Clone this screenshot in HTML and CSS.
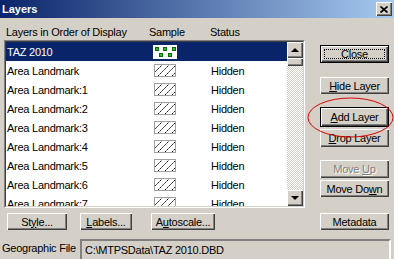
FILE: index.html
```html
<!DOCTYPE html>
<html lang="en">
<head>
    <meta charset="UTF-8">
    <title>Layers</title>
    <link rel="stylesheet" href="styles.css">
</head>
<body>
    <svg class="defs" width="0" height="0">
        <symbol id="hatch" viewBox="0 0 22 13">
            <g stroke="#000" stroke-dasharray="2 1">
                <line x1="-3" y1="12" x2="8" y2="1"/>
                <line x1="4" y1="12" x2="15" y2="1"/>
                <line x1="11" y1="12" x2="22" y2="1"/>
                <line x1="18" y1="12" x2="29" y2="1"/>
            </g>
            <rect x="0.5" y="0.5" width="21" height="12" fill="none" stroke="#a0a0a0"/>
        </symbol>
    </svg>

    <div class="window">
        <div class="titlebar">
            <span class="title">Layers</span>
            <button class="tb-close">
                <svg width="8" height="7" viewBox="0 0 8 7"><path d="M0.5 0.5 L7.5 6.5 M7.5 0.5 L0.5 6.5" stroke="#000" stroke-width="1.7"/></svg>
            </button>
        </div>

        <div class="main">
            <div class="left">
                <div class="cols">
                    <span>Layers in Order of Display</span>
                    <span>Sample</span>
                    <span>Status</span>
                </div>
                <div class="listbox">
                    <div class="listbox-inner">
                        <div class="rows">
                            <div class="row selected">
                                <span>TAZ 2010</span>
                                <span class="taz">
                                    <i style="left:2px;top:2px"></i>
                                    <i style="left:10px;top:2px"></i>
                                    <i style="left:19px;top:2px"></i>
                                    <i style="left:6px;top:8px"></i>
                                    <i style="left:15px;top:8px"></i>
                                </span>
                                <span></span>
                            </div>
                            <div class="row"><span>Area Landmark</span><svg class="hatch"><use href="#hatch"/></svg><span>Hidden</span></div>
                            <div class="row"><span>Area Landmark:1</span><svg class="hatch"><use href="#hatch"/></svg><span>Hidden</span></div>
                            <div class="row"><span>Area Landmark:2</span><svg class="hatch"><use href="#hatch"/></svg><span>Hidden</span></div>
                            <div class="row"><span>Area Landmark:3</span><svg class="hatch"><use href="#hatch"/></svg><span>Hidden</span></div>
                            <div class="row"><span>Area Landmark:4</span><svg class="hatch"><use href="#hatch"/></svg><span>Hidden</span></div>
                            <div class="row"><span>Area Landmark:5</span><svg class="hatch"><use href="#hatch"/></svg><span>Hidden</span></div>
                            <div class="row"><span>Area Landmark:6</span><svg class="hatch"><use href="#hatch"/></svg><span>Hidden</span></div>
                            <div class="row"><span>Area Landmark:7</span><svg class="hatch"><use href="#hatch"/></svg><span>Hidden</span></div>
                        </div>
                        <div class="scrollbar">
                            <div class="sb-btn"><span class="arrow-up"></span></div>
                            <div class="sb-thumb"></div>
                            <div class="sb-track"></div>
                            <div class="sb-btn"><span class="arrow-down"></span></div>
                        </div>
                    </div>
                </div>
                <div class="btnrow">
                    <button class="btn b-style">St<u>y</u>le...</button>
                    <button class="btn b-labels"><u>L</u>abels...</button>
                    <button class="btn b-auto">A<u>u</u>toscale...</button>
                </div>
            </div>

            <div class="right">
                <button class="btn default focus b-close">Close</button>
                <button class="btn b-hide"><u>H</u>ide Layer</button>
                <button class="btn default b-add"><u>A</u>dd Layer</button>
                <button class="btn b-drop"><u>D</u>rop Layer</button>
                <button class="btn disabled b-up">Move <u>U</u>p</button>
                <button class="btn b-down">Move Do<u>w</u>n</button>
                <button class="btn b-meta">Metadata</button>
            </div>
        </div>

        <div class="geo">
            <span class="geo-label">Geographic File</span>
            <div class="field">C:\MTPSData\TAZ 2010.DBD</div>
        </div>

        <svg class="callout" width="87" height="42" viewBox="0 0 87 42">
            <ellipse cx="43.5" cy="20.5" rx="42.5" ry="19.5" fill="none" stroke="#e00000" stroke-width="1"/>
        </svg>
    </div>
</body>
</html>
```

FILE: styles.css
```css
/* Janela no estilo clássico */
body {
    margin: 0;
    background-color: #d4d0c8;
    font-family: "Liberation Sans", Arial, sans-serif;
    font-size: 11px;
    letter-spacing: -0.25px;
    color: #000;
}
.defs {
    position: absolute;
}
.window {
    position: relative;
    width: 394px;
    height: 259px;
    overflow: hidden;
}

/* Barra de título */
.titlebar {
    height: 18px;
    display: flex;
    justify-content: space-between;
    align-items: flex-start;
    padding: 0 2px 0 2px;
    box-sizing: border-box;
    background: linear-gradient(to right, #0a246a, #a6caf0);
}
.title {
    color: #fff;
    font-weight: bold;
    letter-spacing: 0;
    line-height: 18px;
}
.tb-close {
    margin-top: 2px;
    width: 16px;
    height: 14px;
    padding: 0;
    border: none;
    background-color: #d4d0c8;
    display: flex;
    align-items: center;
    justify-content: center;
    box-shadow: inset 1px 1px #fff, inset -1px -1px #404040, inset -2px -2px #808080;
}

/* Conteúdo principal */
.main {
    display: flex;
}
.left {
    width: 301px;
    margin-left: 4px;
    padding-top: 8px;
}
.cols {
    display: grid;
    grid-template-columns: 143px 61px 1fr;
    padding-left: 2px;
    height: 13px;
    line-height: 13px;
    margin-bottom: 1px;
}

/* Lista de camadas */
.listbox {
    height: 168px;
    box-sizing: border-box;
    border: 1px solid;
    border-color: #808080 #fff #fff #808080;
}
.listbox-inner {
    height: 100%;
    box-sizing: border-box;
    border: 1px solid;
    border-color: #404040 #d4d0c8 #d4d0c8 #404040;
    display: flex;
}
.rows {
    flex: 1;
    background-color: #fff;
    overflow: hidden;
}
.row {
    display: grid;
    grid-template-columns: 146px 58px 1fr;
    align-items: center;
    height: 19px;
    padding-left: 1px;
}
.row.selected {
    background-color: #0a246a;
    color: #fff;
}
.hatch {
    width: 22px;
    height: 13px;
    margin-left: 1px;
}
.taz {
    position: relative;
    width: 24px;
    height: 14px;
    background-color: #fff;
}
.taz i {
    position: absolute;
    width: 2px;
    height: 2px;
    background-color: #2fc02f;
    border: 1px solid #0a6a0a;
}

/* Barra de rolagem */
.scrollbar {
    width: 16px;
    display: flex;
    flex-direction: column;
}
.sb-btn,
.sb-thumb {
    background-color: #d4d0c8;
    box-shadow: inset 1px 1px #fff, inset -1px -1px #404040, inset -2px -2px #808080;
    display: flex;
    align-items: center;
    justify-content: center;
}
.sb-btn {
    height: 16px;
}
.sb-thumb {
    height: 8px;
}
.sb-track {
    flex: 1;
    background: repeating-conic-gradient(#fff 0 25%, #d4d0c8 0 50%) 0 0 / 2px 2px;
}
.arrow-up {
    border-left: 4px solid transparent;
    border-right: 4px solid transparent;
    border-bottom: 4px solid #000;
}
.arrow-down {
    border-left: 4px solid transparent;
    border-right: 4px solid transparent;
    border-top: 4px solid #000;
}

/* Botões */
.btn {
    font: inherit;
    letter-spacing: inherit;
    color: #000;
    padding: 0;
    border: none;
    background-color: #d4d0c8;
    box-shadow: inset 1px 1px #fff, inset -1px -1px #404040, inset -2px -2px #808080;
    position: relative;
}
.btn.default {
    box-shadow: inset 0 0 0 1px #000, inset 2px 2px #fff, inset -2px -2px #404040, inset -3px -3px #808080;
}
.btn.focus::after {
    content: '';
    position: absolute;
    inset: 4px;
    border: 1px dotted #000;
}
.btn.disabled {
    color: #808080;
    text-shadow: 1px 1px #fff;
}
.btnrow {
    display: flex;
    margin-top: 5px;
    height: 17px;
}
.b-style {
    margin-left: 3px;
    width: 60px;
}
.b-labels {
    margin-left: 13px;
    width: 52px;
}
.b-auto {
    margin-left: 19px;
    width: 64px;
}
.right {
    display: flex;
    flex-direction: column;
    width: 69px;
    margin-left: 15px;
}
.b-close { margin-top: 27px; height: 18px; }
.b-hide { margin-top: 14px; height: 17px; }
.b-add { margin-top: 13px; height: 20px; }
.b-drop { margin-top: 2px; height: 18px; }
.b-up { margin-top: 13px; height: 18px; }
.b-down { margin-top: 2px; height: 17px; }
.b-meta { margin-top: 16px; height: 17px; }

/* Arquivo geográfico */
.geo {
    display: flex;
    align-items: flex-start;
    margin-top: 9px;
}
.geo-label {
    width: 78px;
    padding-left: 2px;
    line-height: 18px;
}
.field {
    flex: 1;
    margin-right: 3px;
    height: 22px;
    box-sizing: border-box;
    padding-left: 3px;
    line-height: 18px;
    border: 2px solid;
    border-color: #808080 #fff #fff #808080;
}
.callout {
    position: absolute;
    left: 307px;
    top: 97px;
}
```
